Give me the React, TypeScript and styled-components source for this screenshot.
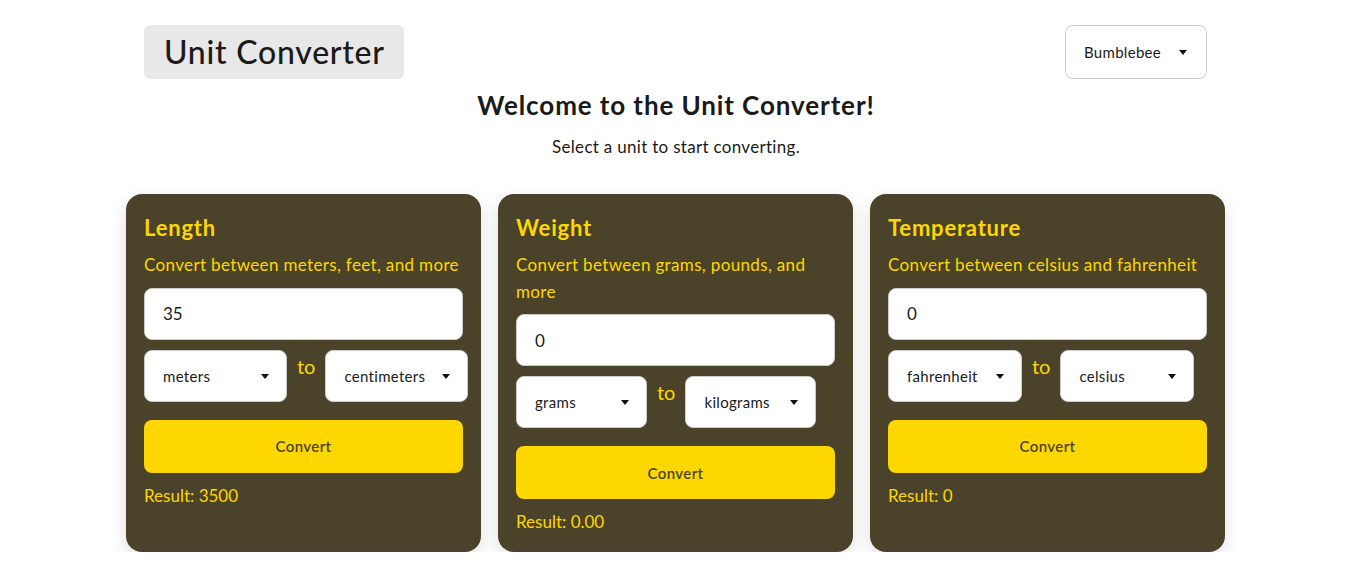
import React, { useState } from "react";
import styled, { createGlobalStyle } from "styled-components";

const FONT = `"Segoe UI", Lato, "Noto Sans", sans-serif`;

const GlobalStyle = createGlobalStyle`
  html, body { margin: 0; padding: 0; background: #ffffff; }
  body { font-family: ${FONT}; color: #1a1a1a; }
  * { box-sizing: border-box; }
`;

const Page = styled.div`
  width: 1100px;
  margin: 0 auto;
  padding: 25px 0 0 0;
  transform: translateX(-1px);
`;

const Header = styled.header`
  display: flex;
  justify-content: space-between;
  align-items: center;
  padding: 0 19px 0 18px;
`;

const TitleBox = styled.div`
  background: #e8e8e8;
  border-radius: 6px;
  padding: 6px 19px 6px 20px;
  font-size: 32px;
  line-height: 42px;
  font-weight: 500;
  letter-spacing: 0.75px;
  color: #1a1a1a;
`;

const ThemeWrap = styled.div`
  position: relative;
  width: 142px;
  height: 54px;
`;

const ThemeSelect = styled.select`
  appearance: none;
  width: 100%;
  height: 100%;
  border: 1px solid #cccccc;
  border-radius: 8px;
  background: #ffffff;
  padding: 0 18px;
  font-family: ${FONT};
  font-size: 15px;
  letter-spacing: 0.3px;
  color: #1a1a1a;
  outline: none;
`;

const Arrow = styled.svg<{ $right: number }>`
  position: absolute;
  top: 50%;
  right: ${(p) => p.$right}px;
  width: 8px;
  height: 5px;
  margin-top: -2px;
  pointer-events: none;
`;

const Intro = styled.section`
  display: flex;
  flex-direction: column;
  align-items: center;
`;

const Welcome = styled.h1`
  margin: 9px 0 0 0;
  font-size: 26px;
  line-height: 34px;
  font-weight: 700;
  letter-spacing: 0.9px;
  color: #1a1a1a;
`;

const Sub = styled.p`
  margin: 13px 0 0 0;
  font-size: 17px;
  line-height: 24px;
  letter-spacing: 0.3px;
  color: #1a1a1a;
`;

const Grid = styled.main`
  display: grid;
  grid-template-columns: repeat(3, 355px);
  gap: 17px;
  margin-top: 35px;
`;

const Card = styled.div`
  background: #4a4329;
  border-radius: 16px;
  padding: 19px 18px 17px 18px;
  box-shadow: 0 6px 18px rgba(0, 0, 0, 0.12);
  color: #ffd700;
  display: flex;
  flex-direction: column;
`;

const CardTitle = styled.h2`
  margin: 0 0 10px 0;
  font-size: 22px;
  line-height: 29px;
  font-weight: 700;
  letter-spacing: 0.8px;
  color: #ffd700;
`;

const CardDesc = styled.p`
  margin: 0 0 9px 0;
  font-size: 17px;
  line-height: 26.5px;
  letter-spacing: 0.35px;
  color: #ffd700;
`;

const ValueInput = styled.input`
  width: 319px;
  height: 52px;
  border: 1px solid #cccccc;
  border-radius: 8px;
  background: #ffffff;
  padding: 0 18px;
  font-family: ${FONT};
  font-size: 17px;
  color: #1a1a1a;
  outline: none;
`;

const UnitRow = styled.div`
  display: flex;
  margin-top: 10px;
`;

const SelectWrap = styled.div<{ $w: number }>`
  position: relative;
  flex: none;
  width: ${(p) => p.$w}px;
  height: 52px;
`;

const UnitSelect = styled.select`
  appearance: none;
  width: 100%;
  height: 100%;
  border: 1px solid #cccccc;
  border-radius: 8px;
  background: #ffffff;
  padding: 0 18px;
  font-family: ${FONT};
  font-size: 15px;
  letter-spacing: 0.3px;
  color: #1a1a1a;
  outline: none;
`;

const To = styled.span`
  margin: 0 10px;
  font-size: 20px;
  line-height: 32px;
  color: #ffd700;
`;

const ConvertButton = styled.button`
  width: 319px;
  height: 53px;
  margin-top: 18px;
  border: none;
  border-radius: 8px;
  background: #ffd700;
  color: #4a4329;
  font-family: ${FONT};
  font-size: 15px;
  font-weight: 600;
  letter-spacing: 0.4px;
  cursor: pointer;
`;

const Result = styled.p`
  margin: 9px 0 0 0;
  font-size: 17px;
  line-height: 27px;
  letter-spacing: 0;
  color: #ffd700;
`;

const TriangleIcon = ({ right }: { right: number }) => (
  <Arrow $right={right} viewBox="0 0 8 5">
    <path d="M0 0 L8 0 L4 5 Z" fill="#111" />
  </Arrow>
);

type Conv = {
  title: string;
  desc: string;
  value: string;
  from: string;
  to: string;
  units: string[];
  width: number;
  result: string;
};

const convs: Conv[] = [
  {
    title: "Length",
    desc: "Convert between meters, feet, and more",
    value: "35",
    from: "meters",
    to: "centimeters",
    units: ["meters", "centimeters", "kilometers", "feet", "inches"],
    width: 143,
    result: "3500",
  },
  {
    title: "Weight",
    desc: "Convert between grams, pounds, and more",
    value: "0",
    from: "grams",
    to: "kilograms",
    units: ["grams", "kilograms", "pounds", "ounces"],
    width: 131,
    result: "0.00",
  },
  {
    title: "Temperature",
    desc: "Convert between celsius and fahrenheit",
    value: "0",
    from: "fahrenheit",
    to: "celsius",
    units: ["celsius", "fahrenheit", "kelvin"],
    width: 134,
    result: "0",
  },
];

const ConverterCard = ({ c }: { c: Conv }) => {
  const [value, setValue] = useState(c.value);
  const [from, setFrom] = useState(c.from);
  const [to, setTo] = useState(c.to);
  return (
    <Card>
      <CardTitle>{c.title}</CardTitle>
      <CardDesc>{c.desc}</CardDesc>
      <ValueInput value={value} onChange={(e) => setValue(e.target.value)} />
      <UnitRow>
        <SelectWrap $w={c.width}>
          <UnitSelect value={from} onChange={(e) => setFrom(e.target.value)}>
            {c.units.map((u) => (
              <option key={u}>{u}</option>
            ))}
          </UnitSelect>
          <TriangleIcon right={18} />
        </SelectWrap>
        <To>to</To>
        <SelectWrap $w={c.width}>
          <UnitSelect value={to} onChange={(e) => setTo(e.target.value)}>
            {c.units.map((u) => (
              <option key={u}>{u}</option>
            ))}
          </UnitSelect>
          <TriangleIcon right={18} />
        </SelectWrap>
      </UnitRow>
      <ConvertButton>Convert</ConvertButton>
      <Result>Result: {c.result}</Result>
    </Card>
  );
};

export default function App() {
  return (
    <>
      <GlobalStyle />
      <Page>
        <Header>
          <TitleBox>Unit Converter</TitleBox>
          <ThemeWrap>
            <ThemeSelect defaultValue="Bumblebee">
              <option>Bumblebee</option>
              <option>Light</option>
              <option>Dark</option>
            </ThemeSelect>
            <TriangleIcon right={20} />
          </ThemeWrap>
        </Header>
        <Intro>
          <Welcome>Welcome to the Unit Converter!</Welcome>
          <Sub>Select a unit to start converting.</Sub>
        </Intro>
        <Grid>
          {convs.map((c) => (
            <ConverterCard key={c.title} c={c} />
          ))}
        </Grid>
      </Page>
    </>
  );
}
